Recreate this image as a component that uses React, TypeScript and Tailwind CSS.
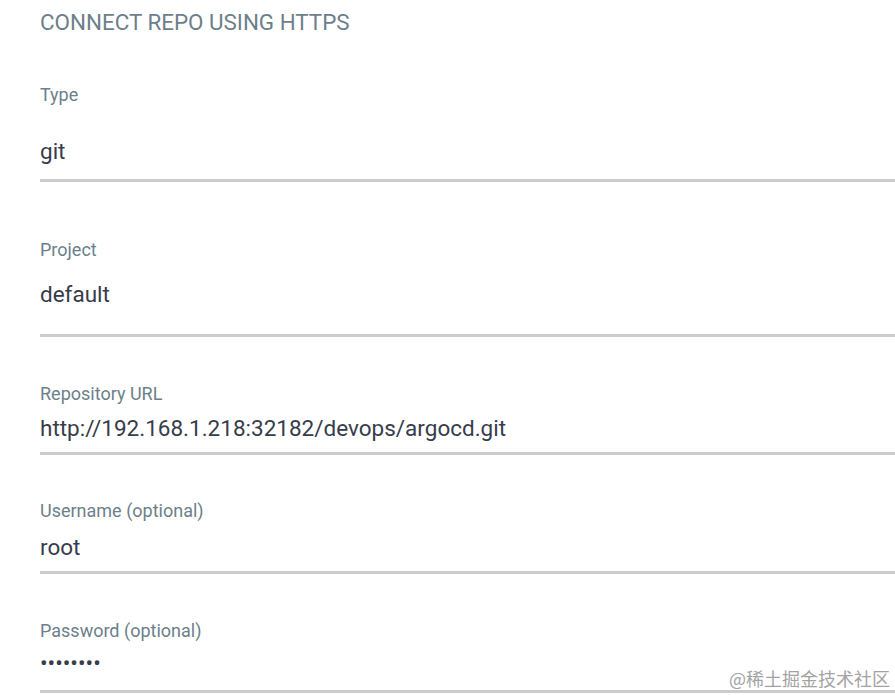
import React from "react";

const labelClass = "text-[18px] leading-[20px] text-[#6d7f8b]";
const valueClass = "text-[22.5px] leading-[24px] text-[#363c4a]";
const lineClass = "h-[3px] w-full bg-[#cccccc]";

export default function App() {
  return (
    <div
      className="relative w-[895px] h-[695px] overflow-hidden bg-white pl-[40px]"
      style={{ fontFamily: "Roboto, 'Liberation Sans', sans-serif" }}
    >
      {/* Title */}
      <div className="pt-[10px] text-[22.4px] leading-[24px] text-[#6d7f8b]">
        CONNECT REPO USING HTTPS
      </div>

      {/* Type */}
      <div className={`${labelClass} mt-[51px]`}>Type</div>
      <div className={`${valueClass} mt-[34px]`}>git</div>
      <div className={`${lineClass} mt-[16px]`} />

      {/* Project */}
      <div className={`${labelClass} mt-[58px]`}>Project</div>
      <div className={`${valueClass} mt-[22px]`}>default</div>
      <div className={`${lineClass} mt-[28px]`} />

      {/* Repository URL */}
      <div className={`${labelClass} mt-[47px]`}>Repository URL</div>
      <div className={`${valueClass} mt-[12px]`}>
        http://192.168.1.218:32182/devops/argocd.git
      </div>
      <div className={`${lineClass} mt-[12px]`} />

      {/* Username */}
      <div className={`${labelClass} mt-[46px]`}>Username (optional)</div>
      <div className={`${valueClass} mt-[14px]`}>root</div>
      <div className={`${lineClass} mt-[12px]`} />

      {/* Password */}
      <div className={`${labelClass} mt-[47px]`}>Password (optional)</div>
      <div className={`${valueClass} mt-[10px]`}>••••••••</div>
      <div className={`${lineClass} mt-[15px]`} />

      {/* watermark */}
      <div
        className="absolute right-[5px] bottom-[7px] text-[18px] leading-[20px] text-[#a3a3a3]"
        style={{ fontFamily: "'Noto Sans CJK SC', sans-serif" }}
      >
        @稀土掘金技术社区
      </div>
    </div>
  );
}
